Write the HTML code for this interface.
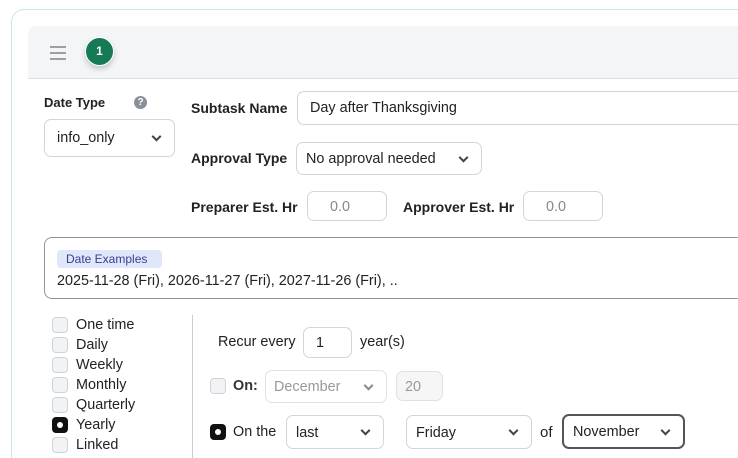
<!DOCTYPE html>
<html><head><meta charset="utf-8"><style>
*{box-sizing:border-box;margin:0;padding:0}
html,body{width:738px;height:458px;overflow:hidden}
body{background:#fff;font-family:"Liberation Sans",Arial,sans-serif;color:#1f2328;position:relative}
.a{position:absolute}
.lbl{font-weight:bold;font-size:14px;color:#222}
.t{font-size:14.4px;color:#222}
.box{border:1px solid #d2d5da;border-radius:7px;background:#fff}
.chev{position:absolute;top:50%;width:7px;height:7px;border-right:2px solid #444;border-bottom:2px solid #444;transform:translateY(-70%) rotate(45deg)}
.cb{position:absolute;width:16px;height:16px;border:1px solid #cfd3d8;border-radius:4px;background:#f2f3f5}
.cbon{background:#111;border-color:#111}
.cbon:after{content:"";position:absolute;left:4px;top:4px;width:6px;height:6px;border-radius:50%;background:#fff}
</style></head><body>
<div class="a" style="left:11px;top:9px;width:727px;height:449px;border:1px solid #c6ebdf;border-right:none;border-bottom:none;border-top-left-radius:13px"></div>
<div class="a" style="left:28px;top:26px;width:710px;height:53px;background:#f4f5f7;border-bottom:1px solid #dcdfe3;border-top-left-radius:8px"></div>
<div class="a" style="left:50px;top:46px;width:16px;height:2px;background:#9aa0a8"></div>
<div class="a" style="left:50px;top:52px;width:16px;height:2px;background:#9aa0a8"></div>
<div class="a" style="left:50px;top:58px;width:16px;height:2px;background:#9aa0a8"></div>
<div class="a" style="left:85px;top:37px;width:29px;height:29px;border-radius:50%;background:#157a55;border:1px solid #fff;box-shadow:0 3px 6px rgba(0,0,0,.2);color:#fff;font-weight:bold;font-size:12px;text-align:center;line-height:27px">1</div>

<div class="a lbl" style="left:44px;top:95px;font-size:13px">Date Type</div>
<div class="a" style="left:134px;top:96px;width:13px;height:13px;border-radius:50%;background:#8a9099;color:#fff;font-size:10px;font-weight:bold;text-align:center;line-height:13px">?</div>
<div class="a box" style="left:44px;top:119px;width:131px;height:38px"><span class="a t" style="left:12px;top:10px">info_only</span><span class="chev" style="right:14px"></span></div>

<div class="a lbl" style="left:191px;top:100px">Subtask Name</div>
<div class="a box" style="left:297px;top:91px;width:441px;height:34px;border-right:none;border-radius:7px 0 0 7px"><span class="a t" style="left:12px;top:8px">Day after Thanksgiving</span></div>
<div class="a lbl" style="left:191px;top:150px">Approval Type</div>
<div class="a box" style="left:296px;top:142px;width:186px;height:33px"><span class="a t" style="left:9px;top:8px">No approval needed</span><span class="chev" style="right:14px"></span></div>
<div class="a lbl" style="left:191px;top:199px">Preparer Est. Hr</div>
<div class="a box" style="left:307px;top:191px;width:80px;height:30px"><span class="a t" style="left:22px;top:7px;color:#888">0.0</span></div>
<div class="a lbl" style="left:403px;top:199px">Approver Est. Hr</div>
<div class="a box" style="left:523px;top:191px;width:80px;height:30px"><span class="a t" style="left:22px;top:7px;color:#888">0.0</span></div>

<div class="a" style="left:44px;top:237px;width:694px;height:62px;border:1px solid #8c959f;border-right:none;border-radius:8px 0 0 8px"></div>
<div class="a" style="left:57px;top:250px;width:105px;height:18px;background:#e1e7fb;border-radius:4px;color:#363f8c;font-size:12px;line-height:18px;padding-left:9px">Date Examples</div>
<div class="a t" style="left:57px;top:273px">2025-11-28 (Fri), 2026-11-27 (Fri), 2027-11-26 (Fri), ..</div>

<div class="cb" style="left:52px;top:317px"></div><div class="a t" style="left:76px;top:317px">One time</div>
<div class="cb" style="left:52px;top:337px"></div><div class="a t" style="left:76px;top:337px">Daily</div>
<div class="cb" style="left:52px;top:357px"></div><div class="a t" style="left:76px;top:357px">Weekly</div>
<div class="cb" style="left:52px;top:377px"></div><div class="a t" style="left:76px;top:377px">Monthly</div>
<div class="cb" style="left:52px;top:397px"></div><div class="a t" style="left:76px;top:397px">Quarterly</div>
<div class="cb cbon" style="left:52px;top:417px"></div><div class="a t" style="left:76px;top:417px">Yearly</div>
<div class="cb" style="left:52px;top:437px"></div><div class="a t" style="left:76px;top:437px">Linked</div>
<div class="a" style="left:192px;top:315px;width:1px;height:143px;background:#c8ccd1"></div>

<div class="a t" style="left:218px;top:334px">Recur every</div>
<div class="a box" style="left:303px;top:327px;width:49px;height:31px"><span class="a t" style="left:12px;top:7px">1</span></div>
<div class="a t" style="left:360px;top:334px">year(s)</div>

<div class="cb" style="left:210px;top:378px"></div>
<div class="a t" style="left:233px;top:378px;font-weight:bold;color:#333">On:</div>
<div class="a box" style="left:265px;top:370px;width:122px;height:33px;border-color:#dfe1e4"><span class="a t" style="left:8px;top:8px;color:#999">December</span><span class="chev" style="right:14px;border-color:#888"></span></div>
<div class="a box" style="left:396px;top:371px;width:47px;height:30px;background:#f6f6f7;border-color:#dfe1e4"><span class="a t" style="left:8px;top:7px;color:#999">20</span></div>

<div class="cb cbon" style="left:210px;top:424px"></div>
<div class="a t" style="left:233px;top:424px">On the</div>
<div class="a box" style="left:286px;top:415px;width:98px;height:34px"><span class="a t" style="left:9px;top:9px">last</span><span class="chev" style="right:14px"></span></div>
<div class="a box" style="left:406px;top:415px;width:126px;height:34px"><span class="a t" style="left:9px;top:9px">Friday</span><span class="chev" style="right:14px"></span></div>
<div class="a t" style="left:540px;top:424px;font-size:15px">of</div>
<div class="a box" style="left:562px;top:414px;width:123px;height:35px;border:2px solid #555"><span class="a t" style="left:9px;top:8px">November</span><span class="chev" style="right:14px"></span></div>
</body></html>
